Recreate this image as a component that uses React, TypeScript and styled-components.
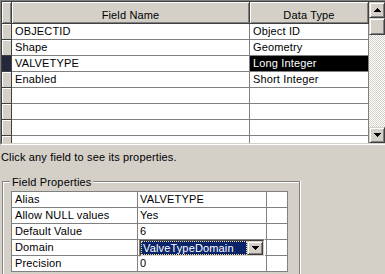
import { Fragment } from 'react';
import styled, { createGlobalStyle } from 'styled-components';

const GlobalStyle = createGlobalStyle`
  html, body {
    margin: 0;
    padding: 0;
    background: #d4d0c8;
    overflow: hidden;
  }
  body {
    font-family: "Liberation Sans", Arial, sans-serif;
    font-size: 11px;
    letter-spacing: 0.15px;
    color: #000;
  }
`;

const Page = styled.div`
  width: 385px;
  height: 274px;
  overflow: hidden;
  background: #d4d0c8;
`;

const GridFrame = styled.div`
  width: 387px;
  height: 145px;
  box-sizing: border-box;
  border: 1px solid;
  border-color: #808080 #fff #fff #808080;
`;

const GridInner = styled.div`
  height: 100%;
  box-sizing: border-box;
  border: 1px solid;
  border-color: #404040 #d4d0c8 #d4d0c8 #404040;
  display: flex;
  background: #fff;
  overflow: hidden;
`;

const Table = styled.div`
  width: 367px;
  overflow: hidden;
`;

const Row = styled.div<{ $header?: boolean }>`
  display: grid;
  grid-template-columns: 10px 238px 119px;
  height: ${(p) => (p.$header ? 22 : 16)}px;
`;

const HeaderCell = styled.div`
  box-sizing: border-box;
  background: #d4d0c8;
  border-right: 1px solid #404040;
  border-bottom: 1px solid #404040;
  box-shadow: inset 1px 1px #fff, inset -1px -1px #808080;
  display: flex;
  justify-content: center;
  padding-top: 7px;
  line-height: 13px;
  white-space: nowrap;
`;

const Selector = styled.div<{ $current?: boolean }>`
  box-sizing: border-box;
  background: ${(p) => (p.$current ? '#23283a' : '#d4d0c8')};
  border-right: 1px solid #404040;
  border-bottom: 1px solid #404040;
  box-shadow: ${(p) => (p.$current ? 'none' : 'inset 1px 1px #fff')};
`;

const Cell = styled.div<{ $selected?: boolean }>`
  box-sizing: border-box;
  border-right: 1px solid #808080;
  border-bottom: 1px solid #808080;
  padding-left: 3px;
  line-height: 15px;
  white-space: nowrap;
  overflow: hidden;
  background: ${(p) => (p.$selected ? '#000' : '#fff')};
  color: ${(p) => (p.$selected ? '#fff' : '#000')};
`;

const ScrollBar = styled.div`
  width: 16px;
  display: flex;
  flex-direction: column;
`;

const Bevel = styled.div<{ $h: number; $w?: number }>`
  box-sizing: border-box;
  height: ${(p) => p.$h}px;
  width: ${(p) => (p.$w ? `${p.$w}px` : 'auto')};
  flex-shrink: 0;
  background: #d4d0c8;
  border: 1px solid;
  border-color: #d4d0c8 #404040 #404040 #d4d0c8;
  box-shadow: inset 1px 1px #fff, inset -1px -1px #808080;
  display: flex;
  align-items: center;
  justify-content: center;
`;

const Track = styled.div`
  flex: 1;
  background: repeating-conic-gradient(#fff 0 25%, #d4d0c8 0 50%) 0 0 / 2px 2px;
`;

const Hint = styled.div`
  margin-top: 6px;
  padding-left: 1px;
  line-height: 13px;
  white-space: nowrap;
`;

const Group = styled.div`
  margin-top: 12px;
  margin-left: 2px;
  width: 298px;
`;

const GroupHead = styled.div`
  display: flex;
  height: 13px;
`;

const Stub = styled.div`
  width: 7px;
  margin-top: 5px;
  border-top: 1px solid #808080;
  border-left: 1px solid #808080;
  box-shadow: inset 1px 1px #fff;
`;

const Legend = styled.div`
  padding: 0 2px;
  line-height: 13px;
  white-space: nowrap;
`;

const HeadLine = styled.div`
  flex: 1;
  margin-top: 5px;
  border-top: 1px solid #808080;
  border-right: 1px solid #808080;
  box-shadow: inset 0 1px #fff, 1px 0 #fff;
`;

const GroupBody = styled.div`
  border-left: 1px solid #808080;
  border-right: 1px solid #808080;
  box-shadow: inset 1px 0 #fff, 1px 0 #fff;
  padding: 2px 0 10px 8px;
`;

const PropGrid = styled.div`
  width: 277px;
  box-sizing: border-box;
  border-top: 1px solid #808080;
  border-left: 1px solid #808080;
  display: grid;
  grid-template-columns: 126px 129px 21px;
  grid-auto-rows: 16px;
  background: #fff;
`;

const PropCell = styled.div<{ $pad: number }>`
  position: relative;
  box-sizing: border-box;
  border-right: 1px solid #808080;
  border-bottom: 1px solid #808080;
  padding-left: ${(p) => p.$pad}px;
  line-height: 15px;
  white-space: nowrap;
`;

const Combo = styled.div`
  position: absolute;
  left: 1px;
  top: -1px;
  width: 126px;
  height: 18px;
  z-index: 1;
  box-sizing: border-box;
  border: 1px solid;
  border-color: #808080 #fff #fff #808080;
  background: #fff;
`;

const ComboInner = styled.div`
  height: 100%;
  box-sizing: border-box;
  border: 1px solid;
  border-color: #404040 #d4d0c8 #d4d0c8 #404040;
  display: flex;
`;

const ComboValue = styled.div`
  flex: 1;
  box-sizing: border-box;
  background: #0a246a;
  color: #fff;
  border: 1px dotted #f5db95;
  line-height: 12px;
  padding-left: 1px;
  white-space: nowrap;
  overflow: hidden;
`;

const Arrow = ({ dir }: { dir: 'up' | 'down' }) => {
  const rows = [7, 5, 3, 1];
  return (
    <svg width="7" height="4" viewBox="0 0 7 4" shapeRendering="crispEdges">
      {rows.map((w, i) => (
        <rect key={i} x={(7 - w) / 2} y={dir === 'down' ? i : 3 - i} width={w} height={1} fill="#000" />
      ))}
    </svg>
  );
};

const fields = [
  { name: 'OBJECTID', type: 'Object ID' },
  { name: 'Shape', type: 'Geometry' },
  { name: 'VALVETYPE', type: 'Long Integer', current: true },
  { name: 'Enabled', type: 'Short Integer' },
  { name: '', type: '' },
  { name: '', type: '' },
  { name: '', type: '' },
  { name: '', type: '' },
];

const props = [
  { label: 'Alias', value: 'VALVETYPE' },
  { label: 'Allow NULL values', value: 'Yes' },
  { label: 'Default Value', value: '6' },
  { label: 'Domain', value: 'ValveTypeDomain', combo: true },
  { label: 'Precision', value: '0' },
];

export default function App() {
  return (
    <Page>
      <GlobalStyle />
      <GridFrame>
        <GridInner>
          <Table>
            <Row $header>
              <HeaderCell />
              <HeaderCell>Field Name</HeaderCell>
              <HeaderCell>Data Type</HeaderCell>
            </Row>
            {fields.map((f, i) => (
              <Row key={i}>
                <Selector $current={f.current} />
                <Cell>{f.name}</Cell>
                <Cell $selected={f.current}>{f.type}</Cell>
              </Row>
            ))}
          </Table>
          <ScrollBar>
            <Bevel $h={16}>
              <Arrow dir="up" />
            </Bevel>
            <Bevel $h={17} />
            <Track />
            <Bevel $h={16}>
              <Arrow dir="down" />
            </Bevel>
          </ScrollBar>
        </GridInner>
      </GridFrame>
      <Hint>Click any field to see its properties.</Hint>
      <Group>
        <GroupHead>
          <Stub />
          <Legend>Field Properties</Legend>
          <HeadLine />
        </GroupHead>
        <GroupBody>
          <PropGrid>
            {props.map((p) => (
              <Fragment key={p.label}>
                <PropCell $pad={3}>{p.label}</PropCell>
                <PropCell $pad={2}>
                  {p.combo ? (
                    <Combo>
                      <ComboInner>
                        <ComboValue>{p.value}</ComboValue>
                        <Bevel $h={14} $w={16}>
                          <Arrow dir="down" />
                        </Bevel>
                      </ComboInner>
                    </Combo>
                  ) : (
                    p.value
                  )}
                </PropCell>
                <PropCell $pad={0} />
              </Fragment>
            ))}
          </PropGrid>
        </GroupBody>
      </Group>
    </Page>
  );
}
